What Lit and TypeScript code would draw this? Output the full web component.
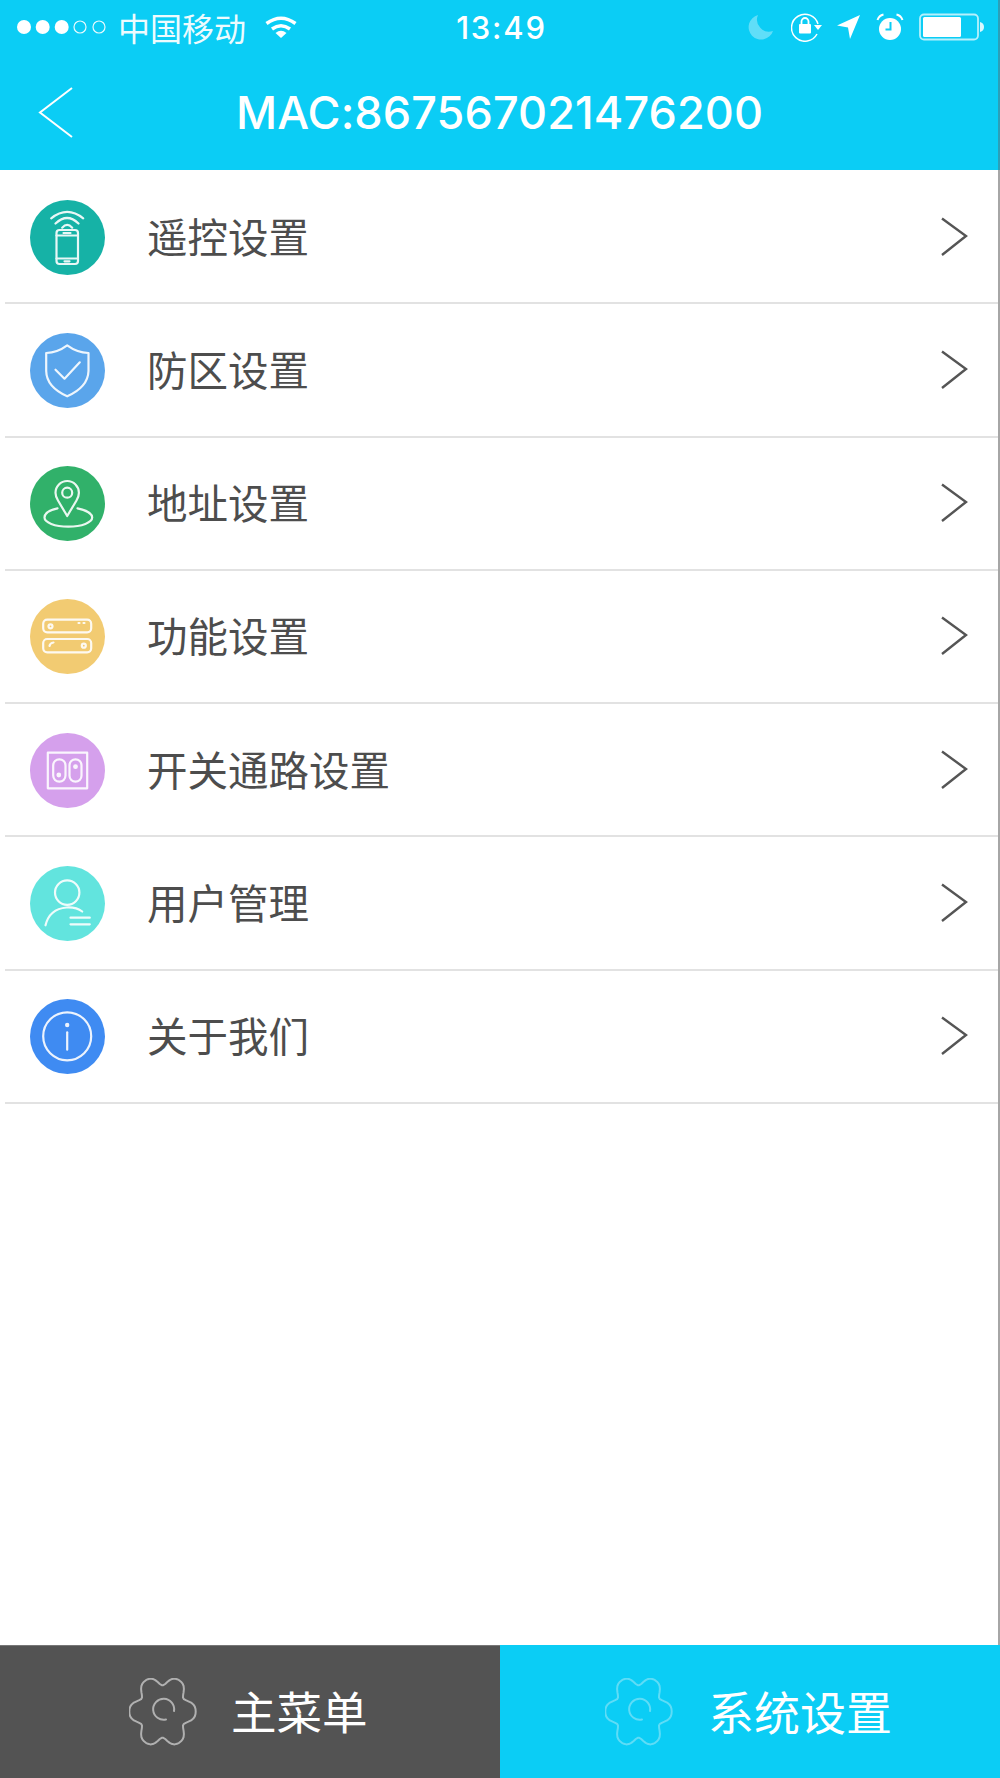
import { LitElement, html, css, svg } from "lit";
import { customElement } from "lit/decorators.js";

const rows = [
  { label: "遥控设置", color: "#16B2A6", icon: svg`
    <rect x="26" y="30" width="21.5" height="34" rx="3"/>
    <path d="M26 35.5H47.5M26 58.5H47.5M33 33H40M34 61.3H39M20.7 18.3Q36.7 5.5 52.7 18.3M25 23.5Q36.7 12.5 48 23.5M31.7 27.7Q36.7 22 41.7 27.7"/>` },
  { label: "防区设置", color: "#5AA5EB", icon: svg`
    <path d="M36.7 12.3Q27 19.5 15.7 20V38Q16 54 36.7 63.3Q57.5 54 58 38V20Q46.5 19.5 36.7 12.3Z"/>
    <path d="M25 36.7L34 45.7L49.3 29.3"/>` },
  { label: "地址设置", color: "#31B16A", icon: svg`
    <path d="M36.7 50L27.5 34.5Q25 30.5 25 26.7A11.7 11.7 0 0 1 48.4 26.7Q48.4 30.5 46 34.5Z"/>
    <circle cx="36.7" cy="26.7" r="5"/>
    <path d="M27 42.3C19 44 14 47.500 14 51.600C14 56.500 24 60.600 37.800 60.600C51.500 60.600 61.700 56.500 61.700 51.600C61.700 47.500 55 44 47 42.300"/>` },
  { label: "功能设置", color: "#F2CB72", icon: svg`
    <rect x="12.700" y="20.700" width="48" height="12.600" rx="4"/>
    <rect x="12.700" y="40" width="48" height="13.300" rx="4"/>
    <circle cx="20" cy="27.300" r="2"/><circle cx="53.300" cy="46.700" r="2"/>
    <path d="M48 24H49M53 24H54M19 47Q19.500 44 23 43.500"/>` },
  { label: "开关通路设置", color: "#D5A0EC", icon: svg`
    <rect x="17.300" y="19.700" width="39.400" height="35.600"/>
    <rect x="22.700" y="26.300" width="12.300" height="22.400" rx="6.100"/>
    <rect x="39" y="26.300" width="12" height="22.400" rx="6"/>
    <circle cx="28.300" cy="42" r="2.400" class="solid"/><circle cx="45" cy="33.700" r="2.400" class="solid"/>` },
  { label: "用户管理", color: "#62E4DE", icon: svg`
    <circle cx="36.700" cy="26.600" r="12.200"/>
    <path d="M15 59.300Q19 43 36 41.500Q46 41 51.700 45.500M40 51.700H59.300M40 58.300H59.300"/>` },
  { label: "关于我们", color: "#3F8BF2", icon: svg`
    <circle cx="36.700" cy="37.300" r="24"/>
    <path d="M36.700 33.300V50.700"/>
    <circle cx="36.700" cy="26" r="2.200" class="solid"/>` },
];

function gearOutline(): string {
  const pts: string[] = [];
  for (let deg = 0; deg < 360; deg += 4) {
    const a = (deg * Math.PI) / 180;
    const r = 32 + 5 * Math.cos(6 * a) - 0.9 * Math.cos(12 * a);
    const x = 33.5 + 0.92 * r * Math.cos(a);
    const y = 33.5 + r * Math.sin(a);
    pts.push(`${x.toFixed(1)} ${y.toFixed(1)}`);
  }
  return `M${pts.join("L")}Z`;
}
const gearPath = gearOutline();

const gear = (cls: string) => html`
  <svg class="gear ${cls}" width="68" height="68" viewBox="0 0 68 68" fill="none" stroke-linecap="round" stroke-linejoin="round">
    <path d=${gearPath}/>
    <path class="inner" d="M45 33A10.500 10.500 0 1 0 37 41.500"/>
  </svg>`;

@customElement("app-root")
export class AppRoot extends LitElement {
  static styles = css`
    :host {
      display: flex;
      flex-direction: column;
      box-sizing: border-box;
      width: 1000px;
      height: 1778px;
      background: #fff;
      font-family: "Noto Sans CJK SC", "Liberation Sans", sans-serif;
      overflow: hidden;
    }
    .top {
      height: 170px;
      flex: none;
      background: #0bcdf5;
      color: #fff;
      display: flex;
      flex-direction: column;
      border-right: 2px solid #2c9fb8;
      box-sizing: border-box;
    }
    .status {
      height: 54px;
      display: grid;
      grid-template-columns: 1fr auto 1fr;
      align-items: center;
    }
    .status-left { display: flex; align-items: center; padding-left: 16px; }
    .carrier { font-size: 32px; line-height: 54px; margin-left: 10px; margin-right: 19px; white-space: nowrap; opacity: .93; }
    .time {
      font-family: Inter, "Liberation Sans", sans-serif;
      font-size: 31px;
      font-weight: 500;
      letter-spacing: 1.800px;
      padding-top: 2px;
      padding-left: 5px;
      line-height: 52px;
    }
    .status-right { display: flex; justify-content: flex-end; align-items: center; }
    .status svg { display: block; flex: none; }
    .m-moon { margin-right: 16.500px; }
    .m-lock { margin-right: 14.500px; }
    .m-loc { margin-right: 15px; }
    .m-alarm { margin-right: 15px; }
    .m-batt { margin-right: 13px; }
    .navbar {
      flex: 1;
      display: grid;
      grid-template-columns: 236px auto 1fr;
      align-items: center;
      padding-top: 2px;
    }
    .back { margin-left: 37px; display: block; }
    .title {
      font-family: Inter, "Liberation Sans", sans-serif;
      font-size: 45px;
      font-weight: 500;
      letter-spacing: .1px;
      line-height: 54px;
      white-space: nowrap;
    }
    .list {
      flex: 1;
      border-right: 2px solid #a6a6a6;
      padding: 1px 0 0 5px;
    }
    .row {
      height: 133.250px;
      box-sizing: border-box;
      border-bottom: 2px solid #e2e2e2;
      display: flex;
      align-items: center;
      padding: 0 30px 0 25px;
    }
    .badge { display: block; flex: none; margin-top: 1px; }
    .badge-icon { fill: none; stroke: #fff; stroke-width: 2.200; stroke-linecap: round; stroke-linejoin: round; opacity: .9; }
    .badge-icon .solid { fill: #fff; stroke: none; }
    .label {
      flex: 1;
      margin-left: 42px;
      font-size: 40.500px;
      font-weight: 400;
      color: #4d4d4d;
      line-height: 56px;
      margin-top: -2px;
    }
    .chev { display: block; flex: none; }
    .tabs { flex: none; height: 133px; display: grid; grid-template-columns: 500px 500px; }
    .tab { display: flex; align-items: center; color: #fff; font-size: 45.500px; font-weight: 400; line-height: 60px; }
    .tab span { margin-top: -4px; }
    .tab-main { background: #535353; padding-left: 129px; border-top: 1px solid #777; box-sizing: border-box; }
    .tab-sys { background: #0bcdf5; padding-left: 105px; font-size: 46px; }
    .tab-main span { margin-left: 34px; }
    .tab-sys span { margin-left: 35px; }
    .gear { display: block; stroke-width: 2; flex: none; }
    .gear.grey { stroke: #b0b0b0; }
    .gear.blue { stroke: #5fdcf6; }
  `;

  render() {
    return html`
      <div class="top">
        <div class="status">
          <div class="status-left">
            <svg width="92" height="18" viewBox="0 0 92 18">
              <g fill="#fff"><circle cx="8" cy="9" r="7"/><circle cx="26.700" cy="9" r="7"/><circle cx="45.700" cy="9" r="7"/></g>
              <g fill="none" stroke="#fff" stroke-width="1.200" opacity=".9"><circle cx="64" cy="9" r="6"/><circle cx="83" cy="9" r="6"/></g>
            </svg>
            <span class="carrier">中国移动</span>
            <svg width="32" height="22" viewBox="0 0 32 22" fill="none" stroke="#fff" stroke-width="3.500">
              <path d="M1.500 7.500Q16 -3 30.500 7.500M7 13Q16 6.500 25 13"/>
              <path d="M10.500 17Q16 12.500 21.500 17L16 22Z" fill="#fff" stroke="none"/>
            </svg>
          </div>
          <div class="time">13:49</div>
          <div class="status-right">
            <svg class="m-moon" width="26" height="26" viewBox="0 0 26 26"><path d="M10 1A12.500 12.500 0 1 0 25 17A12 12 0 0 1 10 1Z" fill="#fff" opacity=".35"/></svg>
            <svg class="m-lock" width="32" height="30" viewBox="0 0 32 30" fill="none" stroke="#fff" stroke-width="1.500">
              <path d="M27 12A13.500 13.500 0 1 0 26 22"/>
              <path d="M23 13H31L27 18Z" fill="#fff" stroke="none"/>
              <rect x="8" y="12" width="12" height="9.500" rx="1" fill="#fff" stroke="none"/>
              <path d="M10.500 12V9.500A3.500 3.500 0 0 1 17.500 9.500V12" stroke-width="1.800"/>
            </svg>
            <svg class="m-loc" width="24" height="25" viewBox="0 0 24 25"><path d="M0 10.500L23 0L13 24L11 12.500Z" fill="#fff"/></svg>
            <svg class="m-alarm" width="28" height="28" viewBox="0 0 28 28">
              <circle cx="14" cy="16" r="11" fill="#fff"/>
              <path d="M14.500 9V16.500H9.500" fill="none" stroke="#0bcdf5" stroke-width="2"/>
              <path d="M1.500 7Q3 2.500 7.500 1.500M20.500 1.500Q25 2.500 26.500 7" fill="none" stroke="#fff" stroke-width="2"/>
            </svg>
            <svg class="m-batt" width="66" height="28" viewBox="0 0 66 28">
              <rect x="1" y="1.500" width="58" height="25" rx="4" fill="none" stroke="#fff" stroke-opacity=".7" stroke-width="1.800"/>
              <rect x="4" y="4" width="38" height="20" rx="1.500" fill="#fff"/>
              <path d="M61 9Q65 10 65 14T61 19Z" fill="#fff" opacity=".85"/>
            </svg>
          </div>
        </div>
        <div class="navbar">
          <svg class="back" width="36" height="52" viewBox="0 0 36 52" fill="none" stroke="#fff" stroke-width="2"><path d="M35 1L3 25.500L35 50"/></svg>
          <div class="title">MAC:867567021476200</div>
        </div>
      </div>
      <div class="list">
        ${rows.map((r) => html`
          <div class="row">
            <svg class="badge" width="75" height="75" viewBox="0 0 75 75">
              <circle cx="37.500" cy="37.500" r="37.500" fill=${r.color}/>
              <g class="badge-icon" transform="translate(.500 0)">${r.icon}</g>
            </svg>
            <div class="label">${r.label}</div>
            <svg class="chev" width="28" height="40" viewBox="0 0 28 40" fill="none" stroke="#555" stroke-width="2.400"><path d="M2 1.500L26 19L2 38"/></svg>
          </div>`)}
      </div>
      <div class="tabs">
        <div class="tab tab-main">${gear("grey")}<span>主菜单</span></div>
        <div class="tab tab-sys">${gear("blue")}<span>系统设置</span></div>
      </div>
    `;
  }
}
